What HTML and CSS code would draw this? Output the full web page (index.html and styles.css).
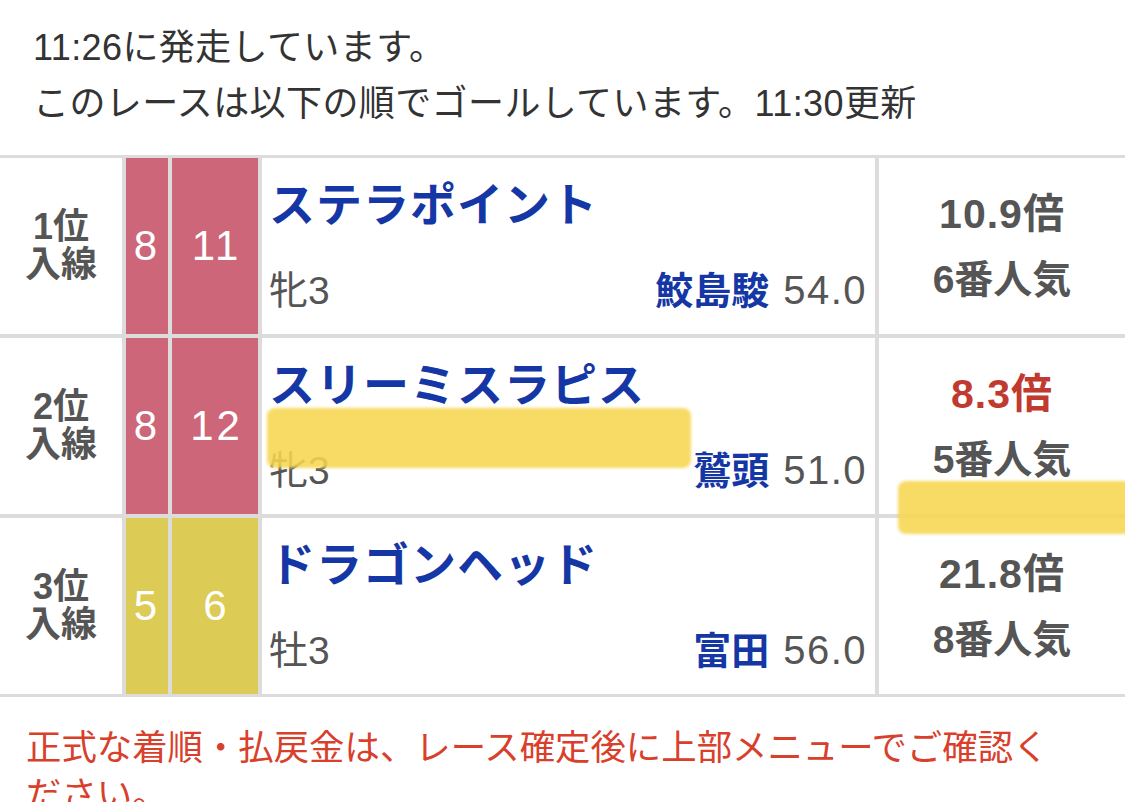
FILE: index.html
```html
<!DOCTYPE html>
<html lang="ja">
<head>
<meta charset="utf-8">
<title>レース結果</title>
<link rel="stylesheet" href="styles.css">
</head>
<body>
<div class="page">
  <div class="status">
    <p>11:26に発走しています。</p>
    <p>このレースは以下の順でゴールしています。11:30更新</p>
  </div>

  <div class="result">
    <div class="rank"><span>1位</span><span>入線</span></div>
    <div class="waku pink">8</div>
    <div class="num pink">11</div>
    <div class="horse">
      <div class="name">ステラポイント</div>
      <div class="meta"><span class="sex">牝3</span><span class="jw"><span class="jockey">鮫島駿</span><span class="weight">54.0</span></span></div>
    </div>
    <div class="odds"><div class="val">10.9倍</div><div class="pop">6番人気</div></div>

    <div class="rank"><span>2位</span><span>入線</span></div>
    <div class="waku pink">8</div>
    <div class="num pink">12</div>
    <div class="horse">
      <div class="name">スリーミスラピス</div>
      <div class="meta"><span class="sex">牝3</span><span class="jw"><span class="jockey">鷲頭</span><span class="weight">51.0</span></span></div>
    </div>
    <div class="odds"><div class="val red">8.3倍</div><div class="pop">5番人気</div></div>

    <div class="rank"><span>3位</span><span>入線</span></div>
    <div class="waku yellow">5</div>
    <div class="num yellow">6</div>
    <div class="horse">
      <div class="name">ドラゴンヘッド</div>
      <div class="meta"><span class="sex">牡3</span><span class="jw"><span class="jockey">富田</span><span class="weight">56.0</span></span></div>
    </div>
    <div class="odds"><div class="val">21.8倍</div><div class="pop">8番人気</div></div>
  </div>

  <p class="note">正式な着順・払戻金は、レース確定後に上部メニューでご確認ください。</p>

  <div class="mark mark-a"></div>
  <div class="mark mark-b"></div>
</div>
</body>
</html>
```

FILE: styles.css
```css
html, body {
  margin: 0;
  padding: 0;
  background: #fff;
}
body {
  font-family: "Liberation Sans", "Noto Sans CJK JP", sans-serif;
  color: #333;
  overflow: hidden;
}
.page {
  position: relative;
  width: 1125px;
  height: 802px;
  overflow: hidden;
}
.status {
  padding: 20px 0 0 33px;
}
.status p {
  margin: 0;
  font-size: 36px;
  line-height: 56px;
  color: #333;
  letter-spacing: 0.4px;
}
.result {
  margin-top: 23px;
  display: grid;
  grid-template-columns: 122px 42px 86px 1fr 246px;
  grid-auto-rows: 176px;
  gap: 4px;
  padding: 3px 0;
  background: #dcdcdc;
}
.result > div {
  background: #fff;
}
.rank {
  display: flex;
  flex-direction: column;
  align-items: center;
  justify-content: center;
  font-size: 36px;
  font-weight: bold;
  line-height: 38px;
  color: #555;
}
.waku, .num {
  display: flex;
  align-items: center;
  justify-content: center;
  color: #fff;
  font-size: 42px;
  letter-spacing: 3px;
}
.num { padding-left: 3px; }
.result > .pink { background: #cd6679; }
.result > .yellow { background: #dccb55; }
.horse {
  padding: 19px 8px 0 7px;
}
.name {
  font-size: 46px;
  line-height: 56px;
  font-weight: bold;
  color: #1537a6;
  letter-spacing: 1px;
}
.meta {
  margin-top: 32px;
  display: flex;
  justify-content: space-between;
  align-items: baseline;
  line-height: 50px;
}
.sex {
  font-size: 39px;
  color: #555;
}
.jockey {
  font-size: 38px;
  font-weight: bold;
  color: #1537a6;
}
.weight {
  margin-left: 14px;
  font-size: 40px;
  color: #555;
  letter-spacing: 1.5px;
}
.odds {
  padding-top: 23px;
  text-align: center;
  color: #555;
}
.val {
  font-size: 41px;
  line-height: 66px;
  font-weight: bold;
  letter-spacing: 1px;
}
.val.red { color: #c03a30; }
.pop {
  font-size: 39px;
  line-height: 66px;
  font-weight: bold;
}
.note {
  margin: 28px 0 0 0;
  padding: 0 60px 0 26px;
  font-size: 35.4px;
  line-height: 47px;
  color: #d8402c;
}
.mark {
  position: absolute;
  background: rgba(246, 214, 80, 0.88);
  border-radius: 8px;
  filter: blur(1.5px);
}
.mark-a {
  left: 267px;
  top: 408px;
  width: 424px;
  height: 60px;
}
.mark-b {
  left: 898px;
  top: 481px;
  width: 240px;
  height: 53px;
}
```
